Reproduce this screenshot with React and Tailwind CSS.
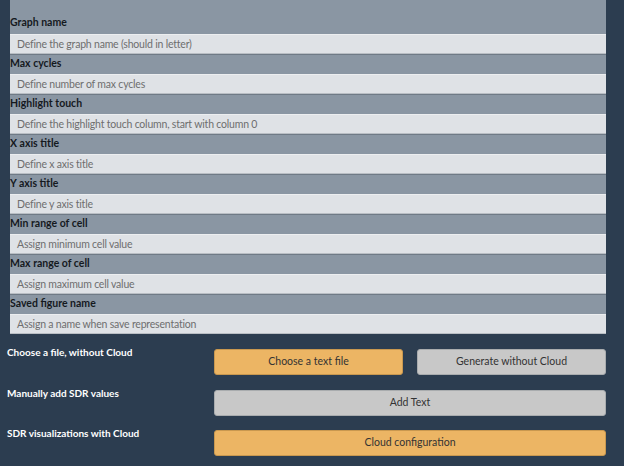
import React from "react";

const fields = [
  { label: "Graph name", placeholder: "Define the graph name (should in letter)" },
  { label: "Max cycles", placeholder: "Define number of max cycles" },
  { label: "Highlight touch", placeholder: "Define the highlight touch column, start with column 0" },
  { label: "X axis title", placeholder: "Define x axis title" },
  { label: "Y axis title", placeholder: "Define y axis title" },
  { label: "Min range of cell", placeholder: "Assign minimum cell value" },
  { label: "Max range of cell", placeholder: "Assign maximum cell value" },
  { label: "Saved figure name", placeholder: "Assign a name when save representation" },
];

function Field({ label, placeholder, first }) {
  return (
    <div>
      <div
        className={
          "bg-[#8a96a3] text-[10.5px] font-bold text-[#15191e] leading-[14px] " +
          (first ? "h-[34px] pt-[15px]" : "h-[20px] pt-[1px] border-t border-[#6f7a86]")
        }
      >
        {label}
      </div>
      <div className="h-[20px] bg-[#dfe2e6] border-t border-[#eceef0] border-b border-b-[#b9bec4] pl-[7px] pt-[1px] flex items-center text-[10.5px] tracking-[-0.2px] text-[#6e6e6e]">
        {placeholder}
      </div>
    </div>
  );
}

function Btn({ children, orange, className = "" }) {
  return (
    <button
      className={
        "h-[26px] rounded-[3px] border text-[10.5px] text-[#333] " +
        (orange ? "bg-[#ecb564] border-[#c9984f] " : "bg-[#c8c8c8] border-[#a9acae] ") +
        className
      }
    >
      {children}
    </button>
  );
}

function RowLabel({ children }) {
  return (
    <div className="w-[214px] pl-[7px] text-[10px] font-bold text-white -mt-[4px]">
      {children}
    </div>
  );
}

export default function App() {
  return (
    <div
      className="w-[624px] h-[466px] bg-[#2c3d50] overflow-hidden"
      style={{ fontFamily: 'Lato, "Noto Sans", sans-serif' }}
    >
      <div className="ml-[10px] w-[596px]">
        {fields.map((f, i) => (
          <Field key={f.label} {...f} first={i === 0} />
        ))}
      </div>

      <div className="flex flex-col gap-[14px] mt-[15px] pr-[18px]">
        <div className="flex">
          <RowLabel>Choose a file, without Cloud</RowLabel>
          <div className="flex-1 flex gap-[14px]">
            <Btn orange className="flex-1">Choose a text file</Btn>
            <Btn className="flex-1">Generate without Cloud</Btn>
          </div>
        </div>
        <div className="flex mt-[1px]">
          <RowLabel>Manually add SDR values</RowLabel>
          <Btn className="flex-1">Add Text</Btn>
        </div>
        <div className="flex">
          <RowLabel>SDR visualizations with Cloud</RowLabel>
          <Btn orange className="flex-1">Cloud configuration</Btn>
        </div>
      </div>
    </div>
  );
}
